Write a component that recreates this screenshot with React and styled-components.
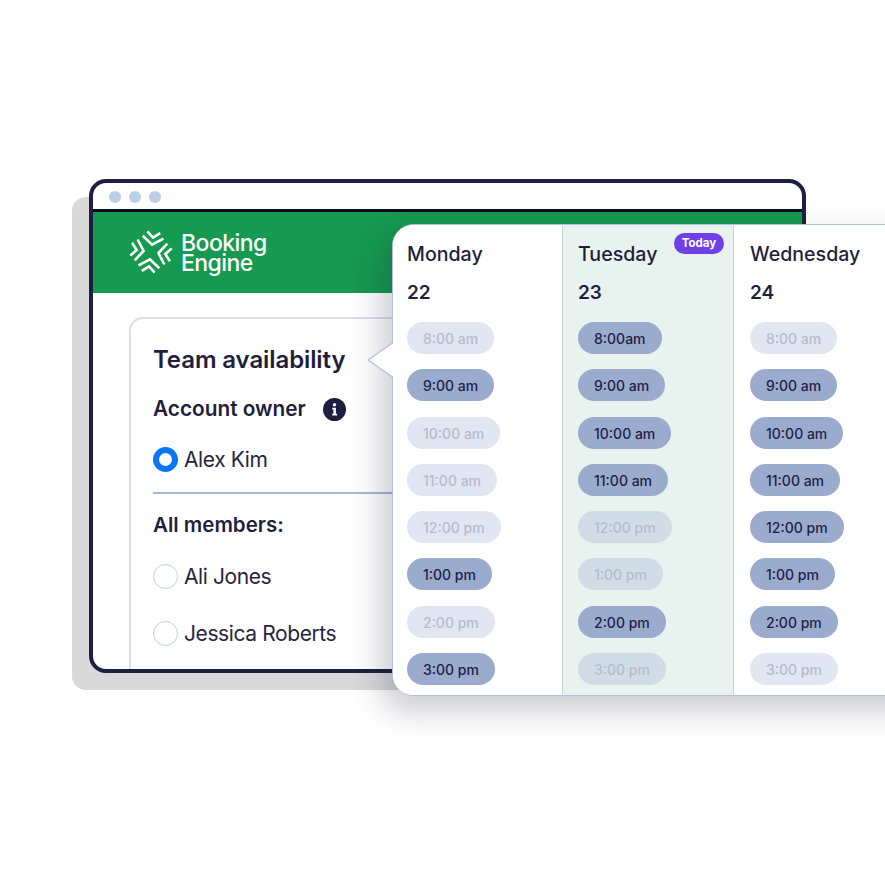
import React from "react";
import styled, { createGlobalStyle } from "styled-components";

const Global = createGlobalStyle`
  html, body { margin: 0; padding: 0; background: #fff; }
  body { font-family: "Inter", "Noto Sans", sans-serif; color: #1f1f3d; }
  * { box-sizing: border-box; }
`;

const Stage = styled.div`
  position: relative;
  width: 885px;
  height: 885px;
  overflow: hidden;
  padding: 179px 0 0 89px;
`;

const Backdrop = styled.div`
  position: absolute;
  left: 72px;
  top: 197px;
  width: 716px;
  height: 493px;
  background: #d9d9d9;
  border-radius: 14px;
`;

const Win = styled.div`
  position: relative;
  width: 717px;
  height: 494px;
  background: #fff;
  border: 4px solid #1e1e40;
  border-radius: 17px;
  overflow: hidden;
  display: flex;
  flex-direction: column;
`;

const TitleBar = styled.div`
  height: 29px;
  flex: none;
  display: flex;
  align-items: center;
  gap: 8px;
  padding: 2px 0 0 16px;
  border-bottom: 3px solid #0d0d20;
`;

const Dot = styled.span`
  width: 12px;
  height: 12px;
  border-radius: 50%;
  background: #bccfe6;
`;

const Banner = styled.div`
  height: 81px;
  flex: none;
  background: #169950;
  display: flex;
  align-items: center;
  gap: 8px;
  padding: 0 0 1px 36px;
`;

const Brand = styled.div`
  color: #fff;
  font-size: 23px;
  font-weight: 500;
  line-height: 20px;
  letter-spacing: -0.55px;
  padding-top: 2px;
`;

const Body = styled.div`
  padding: 24px 0 0 36px;
`;

const Card = styled.div`
  width: 640px;
  height: 400px;
  border: 2px solid #dcdcec;
  border-radius: 14px;
  padding: 26px 22px 0;
`;

const CardTitle = styled.div`
  font-size: 24px;
  font-weight: 600;
  line-height: 30px;
  letter-spacing: -0.1px;
`;

const OwnerRow = styled.div`
  display: flex;
  align-items: center;
  gap: 17px;
  margin-top: 20px;
  height: 28px;
`;

const SubTitle = styled.div`
  font-size: 20.8px;
  font-weight: 600;
  line-height: 28px;
`;

const Radio = styled.span`
  width: 25px;
  height: 25px;
  flex: none;
  border-radius: 50%;
  background: #fff;
  border: ${(p) => (p.$on ? "6px solid #0b76f5" : "1.5px solid #bfcfe8")};
`;

const Option = styled.div`
  display: flex;
  align-items: center;
  gap: 6px;
  height: 28px;
  margin-top: ${(p) => p.$top}px;
  font-size: 21px;
  letter-spacing: -0.4px;
  color: #26263f;
`;

const Divider = styled.div`
  height: 2px;
  width: 300px;
  background: #aab8de;
  margin-top: 19px;
`;

const MembersTitle = styled(SubTitle)`
  margin-top: 17px;
  font-size: 20.5px;
`;

const Calendar = styled.div`
  position: absolute;
  left: 392px;
  top: 224px;
  width: 600px;
  height: 472px;
  background: #fff;
  border: 1.5px solid #b0bfdc;
  border-radius: 22px;
  box-shadow: -10px 14px 32px rgba(30, 30, 60, 0.24);
  display: flex;
`;

const Tail = styled.svg`
  position: absolute;
  left: -26px;
  top: 116px;
`;

const Columns = styled.div`
  display: flex;
  width: 100%;
  border-radius: 20px;
  overflow: hidden;
`;

const Column = styled.div`
  position: relative;
  flex: none;
  width: ${(p) => p.$w}px;
  padding: 15px 0 0 ${(p) => p.$pad}px;
  background: ${(p) => (p.$today ? "#e8f2ee" : "#fff")};
  border-left: ${(p) => (p.$today ? "1px solid #c4d3d6" : "0")};
  border-right: ${(p) => (p.$today ? "1px solid #c4d3d6" : "0")};
`;

const DayName = styled.div`
  font-size: 19.6px;
  font-weight: 500;
  line-height: 28px;
`;

const DayNumber = styled.div`
  font-size: 19px;
  font-weight: 600;
  line-height: 28px;
  margin-top: 11px;
`;

const Slots = styled.div`
  display: grid;
  justify-items: start;
  row-gap: 15.3px;
  margin-top: 15px;
`;

const Slot = styled.div`
  height: 32px;
  line-height: 33px;
  padding: 0 16px;
  border-radius: 16px;
  font-size: 14px;
  font-weight: 500;
  white-space: nowrap;
  background: ${(p) => (p.$on ? "#9aabce" : p.$today ? "#d1dde6" : "#e2e5f2")};
  color: ${(p) => (p.$on ? "#1f1f45" : "#b7bbc9")};
`;

const TodayBadge = styled.div`
  position: absolute;
  left: 111px;
  top: 8px;
  width: 50px;
  height: 21px;
  border-radius: 11px;
  background: #6f3fe8;
  color: #fff;
  font-size: 11.5px;
  font-weight: 700;
  line-height: 21px;
  text-align: center;
`;

const Logo = () => (
  <svg width="44" height="44" viewBox="-22 -22 44 44" fill="none" stroke="#fff" strokeWidth="2.6" style={{ flex: "none" }}>
    {[0, 90, 180, 270].map((a) => (
      <g key={a} transform={`rotate(${a + 8})`}>
        <path d="M-6.5 -20 L0 -14.5 L6.5 -20" />
        <path d="M-10.5 -15 L0 -7.5 L10.5 -15" />
      </g>
    ))}
  </svg>
);

const Info = () => (
  <svg width="23" height="23" viewBox="0 0 23 23" style={{ flex: "none" }}>
    <circle cx="11.5" cy="11.5" r="11.5" fill="#1e1e40" />
    <circle cx="11.5" cy="6.8" r="1.7" fill="#fff" />
    <path d="M9.3 9.8h3.6v6h1.2v1.8H9.2v-1.8h1.2v-4.2H9.3z" fill="#fff" />
  </svg>
);

const days = [
  {
    name: "Monday", num: 22, w: 169, pad: 14,
    slots: [["8:00 am", 0], ["9:00 am", 1], ["10:00 am", 0], ["11:00 am", 0], ["12:00 pm", 0], ["1:00 pm", 1], ["2:00 pm", 0], ["3:00 pm", 1]],
  },
  {
    name: "Tuesday", num: 23, w: 172, pad: 15, today: true,
    slots: [["8:00am", 1], ["9:00 am", 1], ["10:00 am", 1], ["11:00 am", 1], ["12:00 pm", 0], ["1:00 pm", 0], ["2:00 pm", 1], ["3:00 pm", 0]],
  },
  {
    name: "Wednesday", num: 24, w: 200, pad: 16,
    slots: [["8:00 am", 0], ["9:00 am", 1], ["10:00 am", 1], ["11:00 am", 1], ["12:00 pm", 1], ["1:00 pm", 1], ["2:00 pm", 1], ["3:00 pm", 0]],
  },
];

export default function App() {
  return (
    <Stage>
      <Global />
      <Backdrop />
      <Win>
        <TitleBar>
          <Dot />
          <Dot />
          <Dot />
        </TitleBar>
        <Banner>
          <Logo />
          <Brand>
            Booking
            <br />
            Engine
          </Brand>
        </Banner>
        <Body>
          <Card>
            <CardTitle>Team availability</CardTitle>
            <OwnerRow>
              <SubTitle>Account owner</SubTitle>
              <Info />
            </OwnerRow>
            <Option $top={22}>
              <Radio $on />
              Alex Kim
            </Option>
            <Divider />
            <MembersTitle>All members:</MembersTitle>
            <Option $top={23}>
              <Radio />
              Ali Jones
            </Option>
            <Option $top={29}>
              <Radio />
              Jessica Roberts
            </Option>
          </Card>
        </Body>
      </Win>
      <Calendar>
        <Tail width="27" height="38" viewBox="0 0 27 38">
          <path d="M27 1 L1 19 L27 37" fill="#fff" stroke="#b0bfdc" strokeWidth="1.2" />
        </Tail>
        <Columns>
          {days.map((d) => (
            <Column key={d.name} $w={d.w} $pad={d.pad} $today={d.today}>
              {d.today && <TodayBadge>Today</TodayBadge>}
              <DayName>{d.name}</DayName>
              <DayNumber>{d.num}</DayNumber>
              <Slots>
                {d.slots.map(([t, on]) => (
                  <Slot key={t} $on={!!on} $today={d.today}>
                    {t}
                  </Slot>
                ))}
              </Slots>
            </Column>
          ))}
        </Columns>
      </Calendar>
    </Stage>
  );
}
